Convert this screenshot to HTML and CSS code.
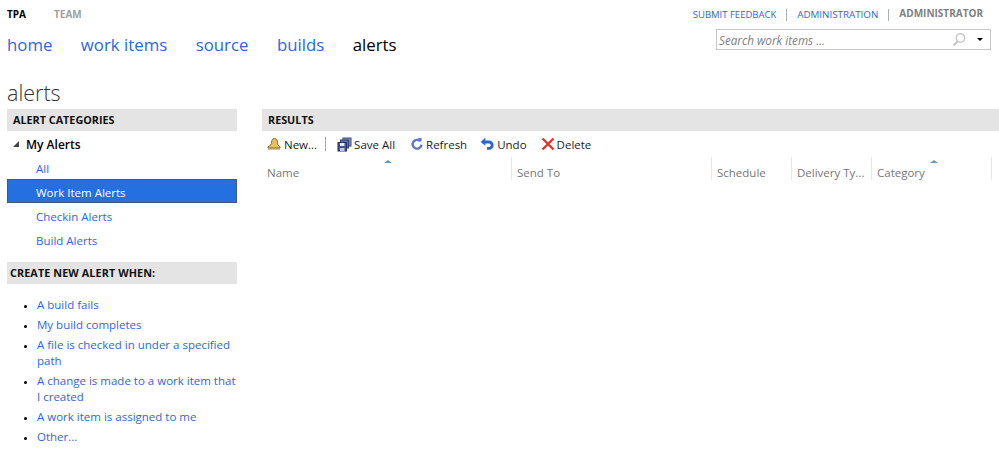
FILE: index.html
```html
<!DOCTYPE html>
<html lang="en">
<head>
    <meta charset="UTF-8">
    <title>alerts</title>
    <link rel="stylesheet" href="styles.css">
</head>
<body>

    <!-- top bar -->
    <div class="top-bar">
        <div class="context-links">
            <span class="context-current">TPA</span>
            <span class="context-team">TEAM</span>
        </div>
        <div class="user-links">
            <a href="#">SUBMIT FEEDBACK</a>
            <span class="user-sep"></span>
            <a href="#" class="admin-link">ADMINISTRATION</a>
            <span class="user-sep"></span>
            <span class="user-name">ADMINISTRATOR</span>
        </div>
    </div>

    <div class="nav-row">
        <nav class="hub-nav">
            <a href="#">home</a>
            <a href="#">work items</a>
            <a href="#">source</a>
            <a href="#">builds</a>
            <span class="hub-current">alerts</span>
        </nav>
        <div class="search-box">
            <span class="search-text">Search work items ...</span>
            <svg class="search-icon" width="16" height="16" viewBox="0 0 16 16">
                <circle cx="9.5" cy="6" r="4.2" fill="none" stroke="#c8c8c8" stroke-width="1.6"/>
                <path d="M6.5 9.2 L2.5 13.5" stroke="#c8c8c8" stroke-width="2"/>
            </svg>
            <span class="search-arrow"></span>
        </div>
    </div>

    <h1 class="page-title">alerts</h1>

    <div class="page-body">
        <!-- left panel -->
        <div class="left-panel">
            <div class="section-head">ALERT CATEGORIES</div>
            <div class="tree-root"><span class="tree-toggle"></span>My Alerts</div>
            <a class="tree-item" href="#">All</a>
            <a class="tree-item tree-selected" href="#">Work Item Alerts</a>
            <a class="tree-item" href="#">Checkin Alerts</a>
            <a class="tree-item" href="#">Build Alerts</a>

            <div class="section-head section-create">CREATE NEW ALERT WHEN:</div>
            <ul class="new-alert-list">
                <li><a href="#">A build fails</a></li>
                <li><a href="#">My build completes</a></li>
                <li><a href="#">A file is checked in under a specified path</a></li>
                <li><a href="#">A change is made to a work item that I created</a></li>
                <li><a href="#">A work item is assigned to me</a></li>
                <li><a href="#">Other...</a></li>
            </ul>
        </div>

        <!-- results -->
        <div class="results">
            <div class="section-head">RESULTS</div>
            <div class="toolbar">
                <span class="tool tool-new">
                    <svg width="14" height="14" viewBox="0 0 14 14">
                        <path d="M7.5 1.5 C5.3 1.5 4.7 3.2 4.6 5.2 C4.5 7.4 3.4 8.6 1 9.6 L1 11 L13 11 L13 9.6 C11 8.6 10.5 7.4 10.4 5.2 C10.3 3.2 9.7 1.5 7.5 1.5 Z" fill="#e6c25a" stroke="#86692c" stroke-width="1"/>
                        <path d="M1 11.5 L13 11.5 L13 12.5 L1 12.5 Z" fill="#a8873e"/>
                    </svg>
                    New...
                </span>
                <span class="tool-sep"></span>
                <span class="tool tool-save">
                    <svg width="15" height="15" viewBox="0 0 15 15">
                        <rect x="6" y="1" width="8" height="8" fill="#7c8fc4" stroke="#3c4a7a"/>
                        <rect x="3.5" y="3" width="8" height="8" fill="#5e73b0" stroke="#2f3c6c"/>
                        <rect x="1" y="5.5" width="8.5" height="8.5" fill="#3f5596" stroke="#27315c"/>
                        <rect x="3" y="6" width="4.5" height="3" fill="#e6ecf7"/>
                        <rect x="3" y="11" width="4.5" height="3" fill="#c3c9d6"/>
                    </svg>
                    Save All
                </span>
                <span class="tool tool-refresh">
                    <svg width="14" height="14" viewBox="0 0 14 14">
                        <path d="M10.2 4.2 A4.4 4.4 0 1 0 11.4 7.6" fill="none" stroke="#5b74d6" stroke-width="2.4"/>
                        <path d="M7.6 0.8 L11.8 1.2 L11.2 5.6 Z" fill="#5b74d6"/>
                    </svg>
                    Refresh
                </span>
                <span class="tool tool-undo">
                    <svg width="15" height="14" viewBox="0 0 15 14">
                        <path d="M4 5 L9 5 A3.2 3.2 0 0 1 9 11.4 L7 11.4" fill="none" stroke="#2e66c8" stroke-width="2.9"/>
                        <path d="M0.6 5 L5.4 0.8 L5.4 8.8 Z" fill="#2e66c8"/>
                    </svg>
                    Undo
                </span>
                <span class="tool tool-delete">
                    <svg width="14" height="14" viewBox="0 0 14 14">
                        <path d="M1.5 1.5 L12.5 12.5 M12.5 1.5 L1.5 12.5" stroke="#e8322a" stroke-width="2.4"/>
                    </svg>
                    Delete
                </span>
            </div>
            <div class="grid-head">
                <div class="col col-name">Name<span class="sort-mark sort-name"></span></div>
                <div class="col col-send">Send To</div>
                <div class="col col-small">Schedule</div>
                <div class="col col-small">Delivery Ty...</div>
                <div class="col col-cat">Category<span class="sort-mark sort-cat"></span></div>
            </div>
        </div>
    </div>

</body>
</html>
```

FILE: styles.css
```css
body {
    margin: 0;
    height: 456px;
    overflow: hidden;
    background-color: #fff;
    font-family: "Open Sans", "Noto Sans", sans-serif;
    font-size: 11.5px;
    color: #000;
}

a {
    color: #2f66e0;
    text-decoration: none;
}

/* top bar */
.top-bar {
    display: flex;
    justify-content: space-between;
    height: 29px;
    padding: 0 16px 0 7px;
}

.context-links {
    display: flex;
    gap: 28px;
    padding-top: 8px;
    font-size: 10px;
    line-height: 13px;
    font-weight: 700;
}

.context-team {
    color: #a0a0a0;
}

.user-links {
    display: flex;
    align-items: flex-start;
    padding-top: 8px;
    font-size: 9.5px;
    line-height: 13px;
}

.admin-link {
    font-size: 9.8px;
}

.user-sep {
    width: 1px;
    height: 12px;
    margin: 1px 10px 0;
    background-color: #a9b0b8;
}

.user-name {
    margin-top: -1px;
    color: #808080;
    font-size: 10px;
    font-weight: 700;
}

/* hub links */
.nav-row {
    display: flex;
    justify-content: space-between;
    height: 50px;
    padding: 0 8px 0 7px;
}

.hub-nav {
    display: flex;
    gap: 28.5px;
    font-size: 16.8px;
    line-height: 32px;
}

.hub-current {
    color: #000;
}

.search-box {
    display: flex;
    align-items: center;
    box-sizing: border-box;
    width: 275px;
    height: 21px;
    padding: 0 7px 0 2px;
    border: 1px solid #c6c6c6;
}

.search-text {
    flex: 1;
    font-size: 11.7px;
    font-style: italic;
    color: #808080;
}

.search-icon {
    margin-right: 10px;
}

.search-arrow {
    border-top: 3px solid #000;
    border-left: 3px solid transparent;
    border-right: 3px solid transparent;
}

.page-title {
    margin: 0;
    padding-left: 7px;
    height: 30px;
    font-size: 21.5px;
    line-height: 28px;
    font-weight: 300;
    color: #333;
}

/* columns */
.page-body {
    display: flex;
    gap: 25px;
    padding-left: 7px;
}

.left-panel {
    flex: 0 0 230px;
}

.results {
    flex: 1;
}

.section-head {
    height: 22px;
    padding-left: 6px;
    background-color: #e4e4e4;
    font-size: 10.8px;
    line-height: 22px;
    font-weight: 700;
    color: #111;
}

.section-create {
    margin-top: 11px;
    padding-left: 3px;
    letter-spacing: 0.1px;
}

/* tree */
.tree-root {
    display: flex;
    align-items: center;
    box-sizing: border-box;
    height: 24px;
    padding: 3px 0 0 6px;
    font-weight: 600;
    font-size: 12px;
}

.tree-toggle {
    width: 0;
    height: 0;
    margin-right: 7px;
    border-bottom: 6px solid #444;
    border-left: 6px solid transparent;
    transform: translateY(-1px);
}

.tree-item {
    display: block;
    box-sizing: border-box;
    height: 24px;
    padding: 4px 0 0 29px;
    line-height: 20px;
}

.tree-selected {
    background-color: #2470e0;
    border: 1px solid #43597a;
    padding: 3px 0 0 28px;
    color: #fff;
}

/* new alert list */
.new-alert-list {
    margin: 13px 0 0;
    padding: 0 0 0 30px;
}

.new-alert-list li {
    margin-bottom: 4px;
    line-height: 16px;
}

.new-alert-list li::marker {
    font-size: 9px;
}

/* toolbar */
.toolbar {
    display: flex;
    align-items: center;
    height: 26px;
    padding-left: 5px;
    color: #222;
}

.tool {
    display: flex;
    align-items: center;
    gap: 2px;
}

.tool-new {
    gap: 3px;
}

.tool-sep {
    width: 1px;
    height: 14px;
    margin: 0 11px 0 8px;
    background-color: #a8a8a8;
}

.tool-refresh {
    margin-left: 15px;
}

.tool-undo {
    margin-left: 13px;
}

.tool-delete {
    margin-left: 14px;
}

/* grid header */
.grid-head {
    display: flex;
    height: 23px;
    padding-right: 7px;
    color: #777;
}

.col {
    position: relative;
    box-sizing: border-box;
    padding: 8px 0 0 5px;
    border-right: 1px solid #e6e6e6;
    line-height: 16px;
    white-space: nowrap;
}

.col-name {
    width: 250px;
}

.col-send {
    width: 200px;
}

.col-small {
    width: 80px;
}

.col-cat {
    width: 120px;
}

.sort-mark {
    position: absolute;
    top: 3px;
    width: 0;
    height: 0;
    border-left: 4px solid transparent;
    border-right: 4px solid transparent;
    border-bottom: 3px solid #5e9bbf;
}

.sort-name {
    left: 122px;
}

.sort-cat {
    left: 58px;
}
```
